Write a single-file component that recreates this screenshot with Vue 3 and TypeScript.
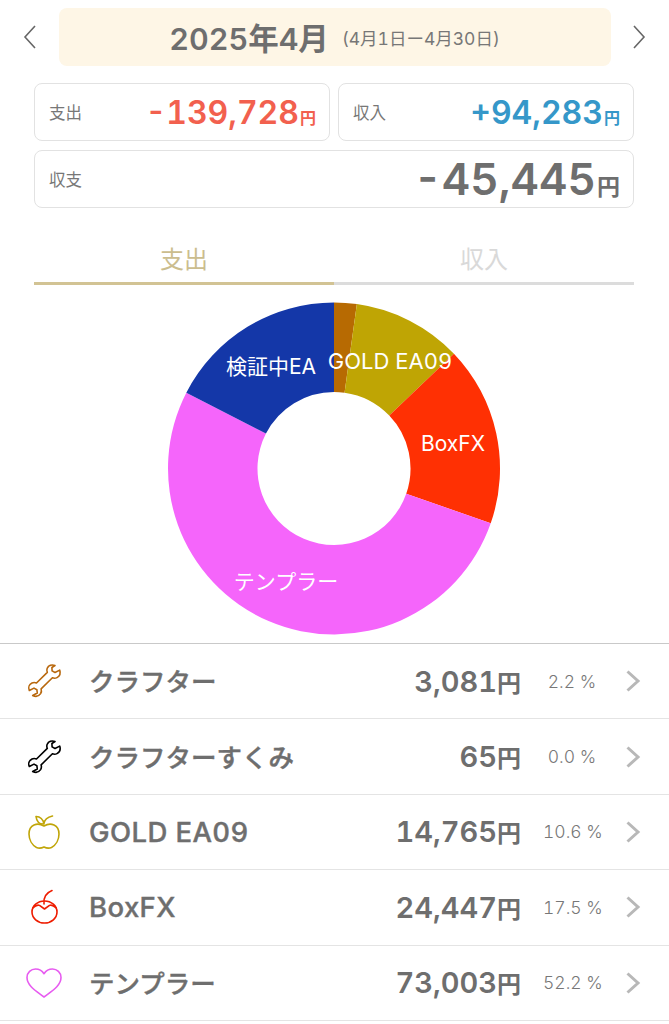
<template>
  <div class="page">
    <header class="month-row">
      <svg class="nav" width="16" height="26" viewBox="0 0 16 26"><path d="M13 2 3 13l10 11" /></svg>
      <div class="month">
        <span class="month-main">2025年4月</span>
        <span class="month-range">(4月1日ー4月30日)</span>
      </div>
      <svg class="nav" width="16" height="26" viewBox="0 0 16 26"><path d="M3 2l10 11L3 24" /></svg>
    </header>

    <section class="summary">
      <div class="card">
        <span class="card-label">支出</span>
        <span class="card-value expense">-139,728<small>円</small></span>
      </div>
      <div class="card">
        <span class="card-label">収入</span>
        <span class="card-value income">+94,283<small>円</small></span>
      </div>
      <div class="card total">
        <span class="card-label">収支</span>
        <span class="card-value balance">-45,445<small>円</small></span>
      </div>
    </section>

    <nav class="tabs">
      <div class="tab active">支出</div>
      <div class="tab">収入</div>
    </nav>

    <svg class="donut" width="669" height="340" viewBox="0 0 669 340">
      <path v-for="s in slices" :key="s.name" :d="s.d" :fill="s.color" />
      <text x="271" y="79" class="pie-label" text-anchor="middle">検証中EA</text>
      <text x="390" y="74" class="pie-label wide" text-anchor="middle">GOLD EA09</text>
      <text x="453" y="156" class="pie-label" text-anchor="middle">BoxFX</text>
      <text x="286" y="294" class="pie-label" text-anchor="middle">テンプラー</text>
    </svg>

    <ul class="list">
      <li v-for="row in rows" :key="row.name" class="row">
        <span class="icon">
          <svg width="40" height="40" viewBox="0 0 40 40" fill="none" :stroke="row.color" stroke-width="1.6" stroke-linejoin="round" stroke-linecap="round">
            <path v-if="row.icon === 'wrench'" d="M31 4.500c-3.200-1.200-6.600-.2-7.800 2.700-.6 1.500-.4 3 .1 4.200L12.500 22c-1.400-.6-3-.7-4.500 0-2.800 1.300-4 4.500-2.700 7.500l4.700-2.400 2.900 1.700.4 3.200-4.600 2.500c3 1.500 6.200.6 7.900-1.900.9-1.500 1-3.200.5-4.700l11.300-11.100c1.500.6 3.200.5 4.600-.2 2.700-1.400 3.700-4.500 2.700-7.500l-4.700 2.400-2.900-1.600-.2-3.400z" />
            <template v-else-if="row.icon === 'apple'">
              <path d="M20 14c-3-1.800-6.500-2.600-10-1C6.500 14.600 5 18 5 22c0 5.500 3 11 7.500 13.500 2.500 1 5 .7 7.500-.5 2.500 1.200 5 1.500 7.500.5C32 33 35 27.500 35 22c0-4-1.500-7.400-5-9-3.500-1.600-7-.8-10 1z" />
              <path d="M20 11.500c.5-4 4-6.500 8.500-7.500M20 12c-4.200.2-7.400-2.400-8-7.500 4-.2 7.400 3 8 7.500z" />
            </template>
            <template v-else-if="row.icon === 'cherry'">
              <ellipse cx="20.500" cy="25" rx="12.500" ry="11" />
              <path d="M8.800 21c2.500-2.400 5-3.400 6.700-2.600l5 3.600 5-3.600c1.700-.8 4.200.2 6.700 2.600M20 17c-.7-6 1.800-11 8-13.500" />
            </template>
            <path v-else d="M20 34C13 28.500 3 23 3 14.500 3 9.500 7 6 11.500 6c3.800 0 6.700 1.900 8.500 4.700C21.800 7.900 24.700 6 28.500 6 33 6 37 9.500 37 14.500 37 23 27 28.500 20 34z" />
          </svg>
        </span>
        <span class="name" :class="{ latin: row.latin }">{{ row.name }}</span>
        <span class="amount">{{ row.amount }}<small>円</small></span>
        <span class="pct">{{ row.pct }} %</span>
        <svg class="chev" width="16" height="24" viewBox="0 0 16 24"><path d="M2.500 2.500 13 12 2.500 21.500" /></svg>
      </li>
    </ul>
  </div>
</template>

<script setup lang="ts">
type Row = { name: string; amount: string; pct: string; color: string; icon: string; latin?: boolean };

const rows: Row[] = [
  { name: 'クラフター', amount: '3,081', pct: '2.2', color: '#b8680e', icon: 'wrench' },
  { name: 'クラフターすくみ', amount: '65', pct: '0.0', color: '#000000', icon: 'wrench' },
  { name: 'GOLD EA09', amount: '14,765', pct: '10.6', color: '#c0a508', icon: 'apple', latin: true },
  { name: 'BoxFX', amount: '24,447', pct: '17.5', color: '#ee1c00', icon: 'cherry', latin: true },
  { name: 'テンプラー', amount: '73,003', pct: '52.2', color: '#e75cf0', icon: 'heart' },
];

const CX = 334;
const CY = 173.500;
const R = 166;
const r = 76.500;

const parts = [
  { name: 'crafter', pct: 2.2, color: '#b76a02' },
  { name: 'gold', pct: 10.65, color: '#bfa504' },
  { name: 'box', pct: 17.5, color: '#ff3003' },
  { name: 'tempura', pct: 52.2, color: '#f565fb' },
  { name: 'verify', pct: 17.45, color: '#1437a8' },
];

const pt = (radius: number, pct: number) => {
  const a = (pct / 100) * Math.PI * 2;
  return `${(CX + radius * Math.sin(a)).toFixed(2)} ${(CY - radius * Math.cos(a)).toFixed(2)}`;
};

let acc = 0;
const slices = parts.map((p) => {
  const from = acc;
  acc += p.pct;
  const large = p.pct > 50 ? 1 : 0;
  const d = `M${pt(R, from)}A${R} ${R} 0 ${large} 1 ${pt(R, acc)}L${pt(r, acc)}A${r} ${r} 0 ${large} 0 ${pt(r, from)}Z`;
  return { name: p.name, color: p.color, d };
});
</script>

<style>
html,
body {
  margin: 0;
  background: #fff;
}
</style>

<style scoped>
.page {
  width: 669px;
  height: 1024px;
  overflow: hidden;
  background: #fff;
  font-family: Inter, "Noto Sans CJK JP", sans-serif;
  font-variant-numeric: tabular-nums;
  color: #6e6e6e;
}
.month-row {
  display: flex;
  align-items: center;
  justify-content: space-between;
  padding: 8px 22px 0;
}
.nav {
  fill: none;
  stroke: #666;
  stroke-width: 1.6;
}
.month {
  width: 552px;
  height: 58px;
  border-radius: 8px;
  background: #fef6e6;
  display: flex;
  align-items: center;
  justify-content: center;
  gap: 13px;
}
.month-main {
  font-size: 30.5px;
  font-weight: 600;
}
.month-range {
  font-size: 17.5px;
  color: #777;
}
.summary {
  display: grid;
  grid-template-columns: 296px 296px;
  column-gap: 8px;
  row-gap: 9px;
  margin: 17px 35px 0 34px;
}
.card {
  height: 58px;
  box-sizing: border-box;
  border: 1px solid #e2e2e2;
  border-radius: 8px;
  display: flex;
  align-items: center;
  justify-content: space-between;
  padding: 0 13px 0 14px;
}
.total {
  grid-column: 1 / 3;
}
.card-label {
  font-size: 16.5px;
  color: #777;
}
.card-value {
  font-size: 32px;
  font-weight: 600;
  white-space: nowrap;
}
.card-value small {
  font-size: 16px;
  margin-left: 1px;
}
.expense {
  color: #f2604e;
}
.income {
  color: #3597c9;
}
.balance {
  font-size: 44px;
  color: #6e6e6e;
}
.balance small {
  font-size: 23px;
}
.tabs {
  display: flex;
  margin: 30px 35px 0 34px;
}
.tab {
  flex: 1;
  text-align: center;
  height: 47px;
  line-height: 44px;
  box-sizing: border-box;
  font-size: 24px;
  color: #d9d9d9;
  border-bottom: 3px solid #dcdcdc;
}
.tab.active {
  color: #cbbd8e;
  border-bottom-color: #d2c394;
}
.donut {
  display: block;
  margin-top: 10px;
}
.pie-label {
  fill: #fff;
  font-size: 21px;
}
.pie-label.wide {
  font-size: 22px;
}
.list {
  list-style: none;
  margin: 8px 0 0;
  padding: 0;
  border-top: 1px solid #c9c9c9;
}
.row {
  height: 75.400px;
  box-sizing: border-box;
  border-bottom: 1px solid #e4e4e4;
  display: flex;
  align-items: center;
  padding-left: 24px;
}
.icon {
  width: 40px;
  height: 40px;
  flex: none;
}
.name {
  margin-left: 25px;
  padding-bottom: 3px;
  flex: 1;
  font-size: 25.5px;
  font-weight: 500;
  -webkit-text-stroke: 0.4px #6e6e6e;
}
.name.latin {
  padding-bottom: 0;
  font-size: 27.5px;
  font-weight: 500;
  letter-spacing: 0.4px;
}
.amount {
  font-size: 29px;
  font-weight: 600;
}
.amount small {
  font-size: 24px;
}
.pct {
  width: 80px;
  padding-left: 22px;
  box-sizing: border-box;
  font-size: 17.5px;
  font-weight: 300;
  color: #777;
  text-align: center;
  white-space: nowrap;
}
.chev {
  margin-left: 24px;
  margin-right: 28px;
  fill: none;
  stroke: #b8b8b8;
  stroke-width: 3;
}
</style>
